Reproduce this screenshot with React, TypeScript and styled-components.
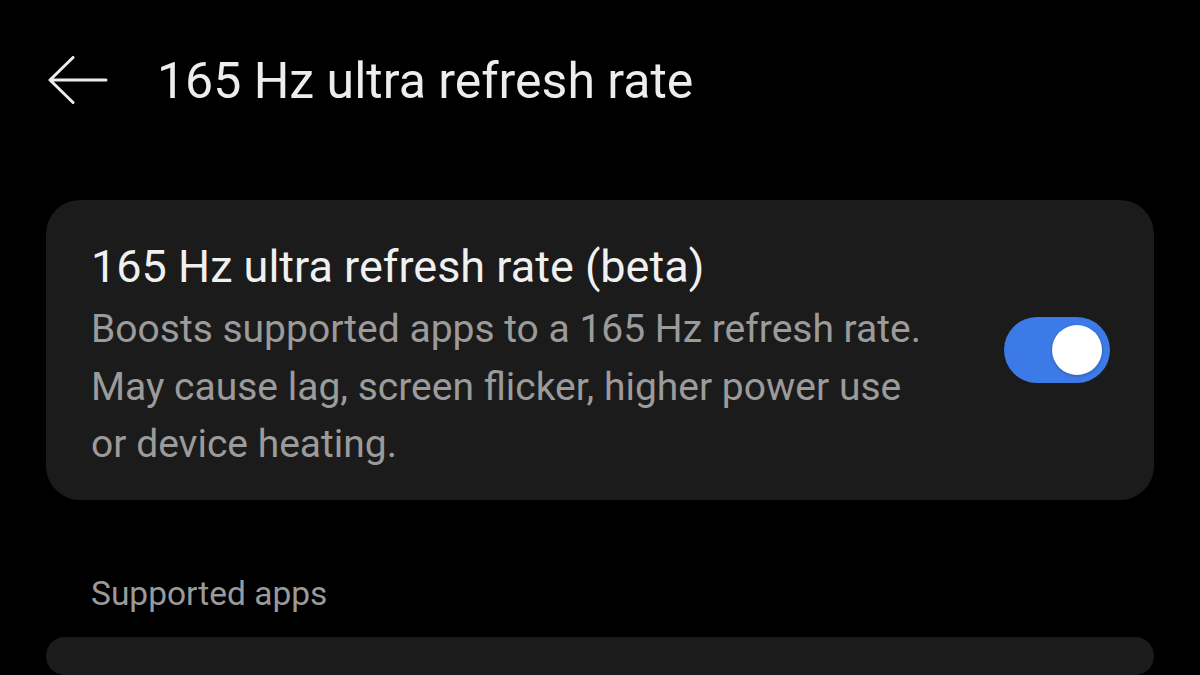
import React from "react";
import styled, { createGlobalStyle } from "styled-components";

const Global = createGlobalStyle`
  html, body {
    margin: 0;
    padding: 0;
    background: #000000;
  }
  body {
    font-family: Roboto, "Noto Sans", "Liberation Sans", sans-serif;
    -webkit-font-smoothing: antialiased;
  }
`;

const Page = styled.div`
  width: 1200px;
  height: 675px;
  overflow: hidden;
  background: #000000;
  display: flex;
  flex-direction: column;
`;

const Header = styled.header`
  height: 162px;
  display: flex;
  align-items: center;
  padding-left: 47px;
  gap: 48px;
  box-sizing: border-box;
`;

const BackButton = styled.button`
  width: 62px;
  height: 50px;
  padding: 0;
  border: none;
  background: transparent;
  display: flex;
  align-items: center;
  justify-content: center;
  color: #ececec;
`;

const Title = styled.h1`
  margin: 0;
  font-size: 50px;
  font-weight: 400;
  color: #ededed;
  letter-spacing: 0;
  line-height: 60px;
`;

const Card = styled.section<{ $height?: number }>`
  margin: 0 46px;
  background: #1b1b1b;
  border-radius: 34px;
  box-sizing: border-box;
  ${(p) => (p.$height ? `height: ${p.$height}px;` : "flex: 1;")}
`;

const ToggleCard = styled(Card)`
  margin-top: 38px;
  padding: 39px 45px 0 45px;
  display: flex;
  align-items: flex-start;
  justify-content: space-between;
`;

const TextCol = styled.div`
  display: flex;
  flex-direction: column;
  gap: 6px;
  max-width: 840px;
`;

const CardTitle = styled.div`
  font-size: 45px;
  line-height: 56px;
  color: #f0f0f0;
  font-weight: 400;
`;

const Desc = styled.div`
  font-size: 39px;
  line-height: 57.5px;
  color: #9b9b9b;
  font-weight: 400;
`;

const Switch = styled.div<{ $on: boolean }>`
  margin-top: 78px;
  margin-right: -1px;
  width: 106px;
  height: 66px;
  border-radius: 33px;
  background: ${(p) => (p.$on ? "#3c7ae7" : "#555555")};
  box-sizing: border-box;
  padding: 8px;
  display: flex;
  justify-content: ${(p) => (p.$on ? "flex-end" : "flex-start")};
  align-items: center;
  flex-shrink: 0;
`;

const Knob = styled.div`
  width: 50px;
  height: 50px;
  border-radius: 50%;
  background: #ffffff;
  box-shadow: 0 1px 3px rgba(0, 0, 0, 0.25);
`;

const SectionLabel = styled.div`
  margin: 74px 0 23px 91px;
  font-size: 33.5px;
  line-height: 40px;
  color: #9a9a9a;
`;

const BackArrow = () => (
  <svg width="62" height="50" viewBox="0 0 62 50" fill="none">
    <path
      d="M3 24 H59 M26 1.5 L3 24 L26 46.5"
      stroke="currentColor"
      strokeWidth="3"
      strokeLinecap="round"
      strokeLinejoin="round"
    />
  </svg>
);

export default function App() {
  return (
    <>
      <Global />
      <Page>
        <Header>
          <BackButton aria-label="Back">
            <BackArrow />
          </BackButton>
          <Title>165 Hz ultra refresh rate</Title>
        </Header>
        <ToggleCard $height={300}>
          <TextCol>
            <CardTitle>165 Hz ultra refresh rate (beta)</CardTitle>
            <Desc>
              Boosts supported apps to a 165 Hz refresh rate. May cause lag,
              screen flicker, higher power use or device heating.
            </Desc>
          </TextCol>
          <Switch $on={true}>
            <Knob />
          </Switch>
        </ToggleCard>
        <SectionLabel>Supported apps</SectionLabel>
        <Card />
      </Page>
    </>
  );
}
